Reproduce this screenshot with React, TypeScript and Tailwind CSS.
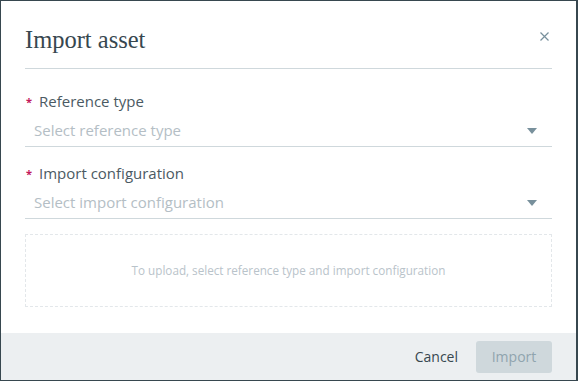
import React from "react";

const Caret = () => (
    <svg width="10" height="6" viewBox="0 0 10 6" className="text-[#78909c]">
        <path d="M0 0h10L5 6z" fill="currentColor" />
    </svg>
);

const Field = ({ label, placeholder }: { label: string; placeholder: string }) => (
    <div className="flex flex-col">
        <div className="flex items-center h-[20px] gap-[7px] pl-px">
            <span className="text-[#c2185b] text-[11px] leading-none font-bold">*</span>
            <span className="text-[15px] text-[#4b5a63]">{label}</span>
        </div>
        <div className="mt-[4px] h-[32px] flex items-center justify-between pl-[9px] pr-[15px] border-b border-[#cfd8dc]">
            <span className="text-[15px] text-[#b4bec5]">{placeholder}</span>
            <Caret />
        </div>
    </div>
);

const App = () => {
    return (
        <div className="w-[578px] h-[381px] bg-[#37474f] pl-px pt-px font-['Open_Sans',sans-serif]">
            <div className="w-[575px] h-[379px] bg-white flex flex-col">
                <div className="mx-6 h-[68px] flex items-center justify-between border-b border-[#cfd8dc] pt-[12px]">
                    <h1 className="font-['Liberation_Serif',serif] text-[24.5px] text-[#37474f]">Import asset</h1>
                    <svg width="9" height="9" viewBox="0 0 9 9" className="text-[#78909c] mr-[3px] mb-[9px]">
                        <path d="M0.5 0.5l8 8M8.5 0.5l-8 8" stroke="currentColor" strokeWidth="1.2" />
                    </svg>
                </div>
                <div className="mx-6 pt-[22px] flex flex-col gap-[16px]">
                    <Field label="Reference type" placeholder="Select reference type" />
                    <Field label="Import configuration" placeholder="Select import configuration" />
                </div>
                <div className="mx-6 mt-[15px] h-[73px] border border-dashed border-[#e3e7ea] flex items-center justify-center">
                    <span className="text-[11.7px] text-[#b9c3ca]">To upload, select reference type and import configuration</span>
                </div>
                <div className="mt-auto h-[47px] bg-[#eceff1] flex items-center justify-end gap-[18px] px-6">
                    <span className="text-[14px] text-[#37474f]">Cancel</span>
                    <div className="w-[76px] h-[32px] rounded-[3px] bg-[#cfd8dc] flex items-center justify-center text-[14px] text-[#90a4ae]">Import</div>
                </div>
            </div>
        </div>
    );
};

export default App;
